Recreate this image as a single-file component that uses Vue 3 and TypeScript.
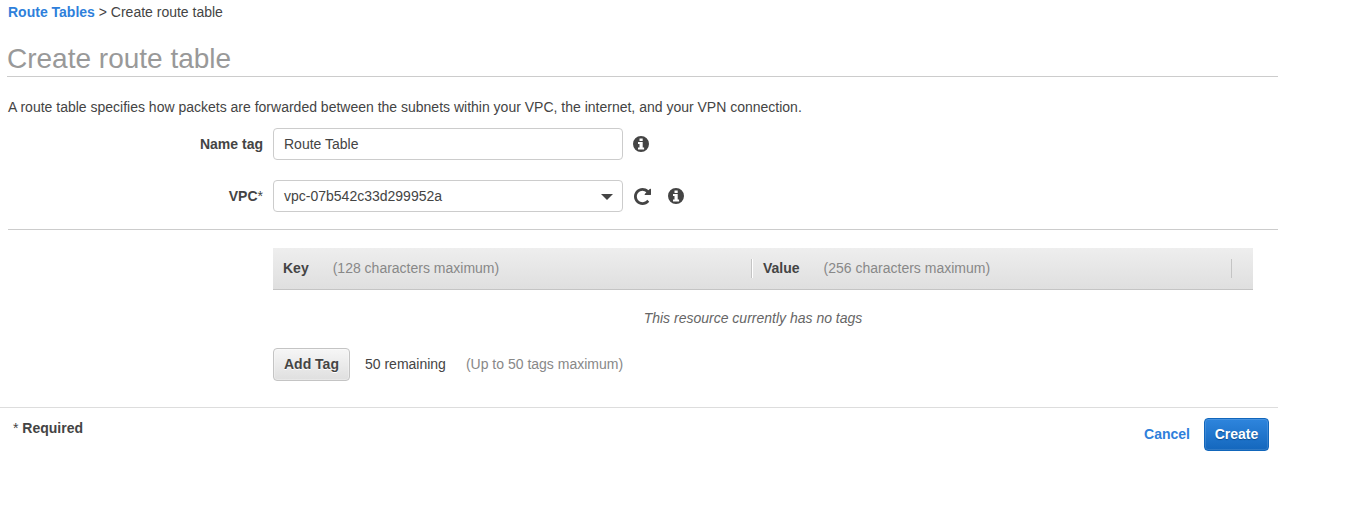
<script setup lang="ts">
import { ref } from 'vue'

const nameTag = ref('Route Table')
const vpcId = 'vpc-07b542c33d299952a'
const columns = [
  { title: 'Key', hint: '(128 characters maximum)' },
  { title: 'Value', hint: '(256 characters maximum)' },
]
const infoPath =
  'M8 0a8 8 0 1 1 0 16a8 8 0 0 1 0-16zM6.5 2.4v2.5h3.2v-2.5zM5 6.1v2h1.5v3.5H5v2h6.1v-2H9.7V6.1z'
const reloadPath =
  'M1664 256v448q0 26-19 45t-45 19h-448q-42 0-59-40-17-39 14-69l138-138q-148-137-349-137-104 0-198.500 40.500t-163.500 109.500-109.500 163.500-40.500 198.500 40.500 198.500 109.500 163.500 163.500 109.500 198.500 40.500q119 0 225-52t179-147q7-10 23-12 15 0 25 9l137 138q9 8 9.500 20.500t-7.500 22.500q-109 132-264 204.500t-327 72.500q-156 0-298-61t-245-164-164-245-61-298 61-298 164-245 245-164 298-61q147 0 284.500 55.500t244.500 156.500l130-129q29-31 70-14 39 17 39 59z'
</script>

<template>
  <main class="page">
    <nav class="crumbs"><a class="link">Route Tables</a> &gt; Create route table</nav>
    <h1 class="title">Create route table</h1>
    <p class="intro">A route table specifies how packets are forwarded between the subnets within your VPC, the internet, and your VPN connection.</p>

    <form class="form" @submit.prevent>
      <div class="row">
        <label class="label" for="name">Name tag</label>
        <input id="name" v-model="nameTag" class="field" type="text" />
        <svg class="info" viewBox="0 0 16 16"><path fill-rule="evenodd" :d="infoPath" /></svg>
      </div>
      <div class="row">
        <span class="label">VPC<span class="star">*</span></span>
        <div class="field select"><span>{{ vpcId }}</span><svg class="caret" viewBox="0 0 12 6"><path d="M0 0h12L6 6z" /></svg></div>
        <svg class="reload" viewBox="128 128 1536 1536"><path :d="reloadPath" /></svg>
        <svg class="info" viewBox="0 0 16 16"><path fill-rule="evenodd" :d="infoPath" /></svg>
      </div>
    </form>

    <section class="tags">
      <div class="thead">
        <div v-for="c in columns" :key="c.title" class="col">
          <b class="col-title">{{ c.title }}</b><span class="hint">{{ c.hint }}</span>
        </div>
      </div>
      <p class="empty">This resource currently has no tags</p>
      <div class="add">
        <button class="btn" type="button">Add Tag</button>
        <span class="remaining">50 remaining</span>
        <span class="hint">(Up to 50 tags maximum)</span>
      </div>
    </section>

    <footer class="footer">
      <div class="required"><span class="star">*</span> <b>Required</b></div>
      <div class="actions"><a class="link">Cancel</a><button class="btn primary" type="button">Create</button></div>
    </footer>
  </main>
</template>

<style>
body {
  background: #fff;
}
</style>

<style scoped>
.page {
  width: 1278px;
  font: 14px/20px "Liberation Sans", Arial, sans-serif;
  color: #444;
  padding-top: 2px;
}
.page * {
  box-sizing: border-box;
}
.crumbs {
  padding-left: 8px;
  height: 20px;
}
.link {
  color: #2e7fdb;
  font-weight: bold;
}
.title {
  margin: 18px 0 0 7px;
  height: 37px;
  border-bottom: 1px solid #ccc;
  color: #999;
  font-size: 28px;
  font-weight: normal;
  line-height: 38px;
}
.intro {
  margin: 20px 0 0 8px;
}
.form {
  margin: 11px 0 0 8px;
  height: 102px;
  border-bottom: 1px solid #ccc;
}
.row {
  display: flex;
  align-items: center;
  height: 32px;
  margin-bottom: 20px;
}
.label {
  width: 255px;
  margin-right: 10px;
  text-align: right;
  font-weight: bold;
}
.star {
  font-weight: normal;
}
.field {
  width: 350px;
  height: 32px;
  border: 1px solid #ccc;
  border-radius: 4px;
  padding: 0 10px;
  background: #fff;
  color: #444;
  font: inherit;
  outline: none;
}
.select {
  display: flex;
  align-items: center;
  justify-content: space-between;
  padding-right: 9px;
}
.caret {
  width: 12px;
  height: 6px;
  margin-top: 2px;
}
.info,
.reload,
.caret {
  fill: #444;
}
.info {
  width: 16px;
  height: 16px;
  margin-left: 10px;
}
.reload {
  width: 17px;
  height: 17px;
  margin: 1px 7px 0 11px;
}
.tags {
  width: 980px;
  margin: 18px 0 0 273px;
}
.thead {
  display: flex;
  align-items: center;
  height: 42px;
  border-bottom: 1px solid #c4c4c4;
  background: linear-gradient(#eee, #dfdfdf);
}
.col {
  width: 480px;
  height: 19px;
  line-height: 19px;
  padding-left: 10px;
  border-right: 1px solid #c4c4c4;
}
.col:first-child {
  width: 479px;
}
.col + .col {
  border-left: 1px solid #fff;
}
.col-title {
  margin-right: 24px;
}
.hint {
  color: #888;
}
.empty {
  width: 960px;
  margin: 18px 0 0;
  text-align: center;
  font-style: italic;
  color: #666;
}
.add {
  display: flex;
  align-items: center;
  margin-top: 20px;
  height: 33px;
  line-height: 22px;
}
.add .hint,
.remaining {
  padding-bottom: 2px;
}
.btn {
  height: 33px;
  padding: 0 10px 2px;
  border: 1px solid #c4c4c4;
  border-radius: 4px;
  background: linear-gradient(#f6f6f6, #dfdfdf);
  box-shadow: inset 0 0 0 1px rgba(255, 255, 255, 0.3);
  color: #444;
  font: bold 14px/20px "Liberation Sans", Arial, sans-serif;
  text-shadow: 0 1px 0 #fff;
}
.remaining {
  margin: 0 20px 0 15px;
}
.footer {
  display: flex;
  justify-content: space-between;
  margin-top: 26px;
  border-top: 1px solid #ddd;
  padding: 10px 9px 0 13px;
}
.actions {
  display: flex;
  align-items: center;
  gap: 14px;
}
.actions .link {
  padding-bottom: 2px;
}
.primary {
  width: 65px;
  padding: 0 0 2px;
  border-color: #1166bb;
  background: linear-gradient(#2e85dd, #1467bd);
  box-shadow: inset 0 0 0 1px rgba(255, 255, 255, 0.12);
  color: #fff;
  text-shadow: 0 1px 1px #0a4a90;
}
</style>
